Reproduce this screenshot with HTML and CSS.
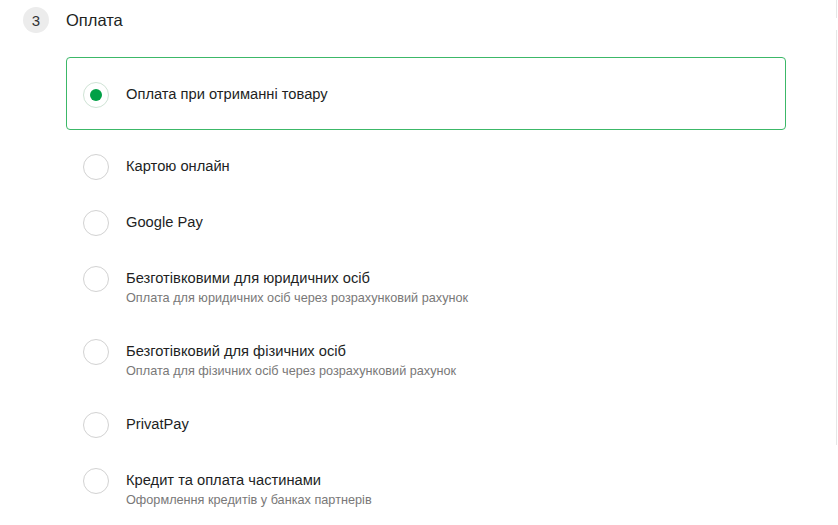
FILE: index.html
```html
<!DOCTYPE html>
<html lang="uk">
<head>
  <meta charset="UTF-8" />
  <meta name="viewport" content="width=device-width, initial-scale=1.0"/>
  <title>Оплата</title>
  <link rel="stylesheet" href="styles.css">
</head>
<body>

  <div class="page">
    <main class="checkout">

      <div class="step-head">
        <span class="step-num">3</span>
        <h2 class="step-title">Оплата</h2>
      </div>

      <div class="payment-list">
        <label class="option option-selected">
          <span class="radio radio-checked"></span>
          <span class="option-text">
            <span class="option-title">Оплата при отриманні товару</span>
          </span>
        </label>

        <label class="option">
          <span class="radio"></span>
          <span class="option-text">
            <span class="option-title">Картою онлайн</span>
          </span>
        </label>

        <label class="option">
          <span class="radio"></span>
          <span class="option-text">
            <span class="option-title">Google Pay</span>
          </span>
        </label>

        <label class="option">
          <span class="radio"></span>
          <span class="option-text">
            <span class="option-title">Безготівковими для юридичних осіб</span>
            <span class="option-sub">Оплата для юридичних осіб через розрахунковий рахунок</span>
          </span>
        </label>

        <label class="option">
          <span class="radio"></span>
          <span class="option-text">
            <span class="option-title">Безготівковий для фізичних осіб</span>
            <span class="option-sub">Оплата для фізичних осіб через розрахунковий рахунок</span>
          </span>
        </label>

        <label class="option">
          <span class="radio"></span>
          <span class="option-text">
            <span class="option-title">PrivatPay</span>
          </span>
        </label>

        <label class="option">
          <span class="radio"></span>
          <span class="option-text">
            <span class="option-title">Кредит та оплата частинами</span>
            <span class="option-sub">Оформлення кредитів у банках партнерів</span>
          </span>
        </label>
      </div>
    </main>

    <aside class="side">
      <div class="side-top"></div>
      <div class="side-main"></div>
    </aside>
  </div>

</body>
</html>
```

FILE: styles.css
```css
* {
  box-sizing: border-box;
}

body {
  margin: 0;
  background: #fff;
  color: #221f1f;
  font-family: 'Liberation Sans', Arial, sans-serif;
}

.page {
  display: flex;
  width: 838px;
  height: 525px;
  overflow: hidden;
}

.checkout {
  flex: 1;
}

.step-head {
  display: flex;
  align-items: center;
  gap: 17px;
  padding: 7px 0 0 23px;
}

.step-num {
  width: 26px;
  height: 26px;
  border-radius: 50%;
  background: #ececec;
  display: flex;
  align-items: center;
  justify-content: center;
  font-size: 15px;
  color: #333;
}

.step-title {
  margin: 0;
  font-size: 16.5px;
  font-weight: normal;
  color: #221f1f;
}

.payment-list {
  display: flex;
  flex-direction: column;
  width: 720px;
  margin: 24px 0 0 66px;
}

.option {
  display: flex;
  align-items: flex-start;
  gap: 17px;
  padding: 14px 16px;
  border: 1px solid transparent;
  border-radius: 4px;
  cursor: pointer;
}

.option-selected {
  padding: 24px 16px 21px;
  margin-bottom: 9px;
  border-color: #3cb868;
}

.radio {
  flex: none;
  width: 26px;
  height: 26px;
  border-radius: 50%;
  border: 1px solid #d2d2d2;
  display: flex;
  align-items: center;
  justify-content: center;
}

.radio-checked {
  border-color: #cfe3d5;
}

.radio-checked::after {
  content: "";
  width: 12px;
  height: 12px;
  border-radius: 50%;
  background: #00a046;
}

.option-text {
  display: flex;
  flex-direction: column;
}

.option-title {
  font-size: 14.7px;
  line-height: 24px;
}

.option-sub {
  font-size: 12.7px;
  line-height: 16px;
  margin-bottom: 3px;
  color: #797878;
}

.side {
  flex: none;
  width: 2px;
}

.side-top {
  height: 18px;
  border-left: 1px solid #e6e6e6;
}

.side-main {
  margin-top: 12px;
  height: 415px;
  border-left: 1px solid #e6e6e6;
}
```
